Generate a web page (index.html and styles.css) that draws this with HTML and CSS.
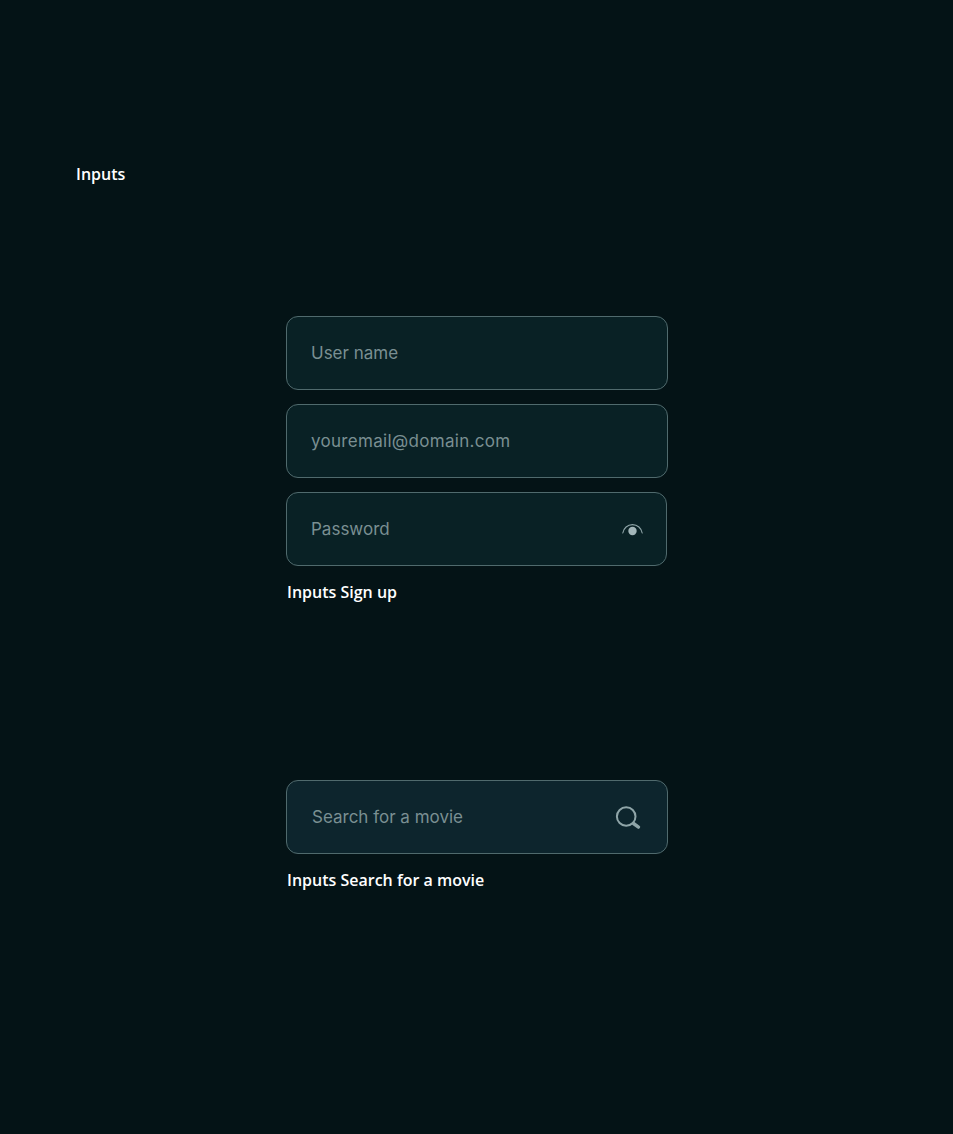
FILE: index.html
```html
<!DOCTYPE html>
<html lang="en">
<head>
<meta charset="utf-8">
<title>Inputs</title>
<link rel="stylesheet" href="styles.css">
</head>
<body>
<main class="page">
  <h1 class="page-title">Inputs</h1>
  <section class="group group-signup">
    <div class="field"><span class="placeholder">User name</span></div>
    <div class="field"><span class="placeholder placeholder-email">youremail@domain.com</span></div>
    <div class="field field-password">
      <span class="placeholder">Password</span>
      <svg class="icon-eye" width="21" height="16" viewBox="0 0 21 16" fill="none" aria-hidden="true">
        <path d="M.8 12A9.8 9.8 0 0 1 20.2 12" stroke="#8fa5a8" stroke-width="1.1" stroke-linecap="round"/>
        <circle cx="10.5" cy="10" r="4.2" fill="#a3b6b9"/>
      </svg>
    </div>
    <p class="caption">Inputs Sign up</p>
  </section>
  <section class="group group-search">
    <div class="field field-search">
      <span class="placeholder">Search for a movie</span>
      <svg class="icon-search" width="26" height="26" viewBox="0 0 26 26" fill="none" aria-hidden="true">
        <circle cx="11.2" cy="11.5" r="9.3" stroke="#8fa5a8" stroke-width="2"/>
        <path d="M18.5 18.5l5 3.6" stroke="#8fa5a8" stroke-width="3.4" stroke-linecap="round"/>
      </svg>
    </div>
    <p class="caption">Inputs Search for a movie</p>
  </section>
</main>
</body>
</html>
```
FILE: styles.css
```css
* { box-sizing: border-box; }
html, body { margin: 0; padding: 0; }
body {
  background: #041316;
  min-height: 1134px;
  font-family: "Open Sans", "Noto Sans", sans-serif;
}
.page {
  display: flex;
  flex-direction: column;
  padding-top: 163px;
  padding-bottom: 242px;
}
.page-title {
  margin: 0 0 131px 76px;
  font-size: 16px;
  line-height: 22px;
  font-weight: 600;
  color: #fff;
}
.group {
  display: flex;
  flex-direction: column;
  width: 382px;
  margin-left: 286px;
  gap: 14px;
}
.group-search { margin-top: 177px; }
.field {
  display: flex;
  align-items: center;
  justify-content: space-between;
  height: 74px;
  padding: 0 24px;
  background: #092125;
  border: 1px solid #506a6d;
  border-radius: 12px;
}
.field-password { width: 381px; padding-right: 23px; }
.field-search {
  background: #0d252d;
  padding-left: 25px;
  padding-right: 26px;
}
.placeholder {
  font-family: Inter, "Noto Sans", sans-serif;
  font-size: 17px;
  line-height: 25px;
  color: #7a8f92;
}
.placeholder-email { letter-spacing: 0.3px; }
.icon-search { margin-top: 1px; }
.caption {
  margin: 1px 0 0 1px;
  font-size: 16px;
  line-height: 22px;
  font-weight: 600;
  color: #fff;
}
```
